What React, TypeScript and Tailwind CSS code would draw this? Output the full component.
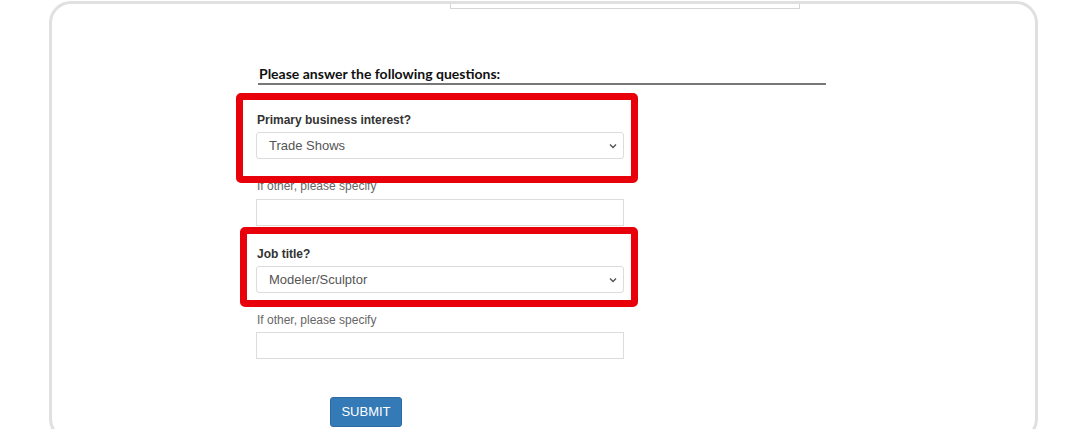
import React from 'react';

const Chevron: React.FC = () => (
  <svg width="8" height="6" viewBox="0 0 8 6" className="text-[#555]">
    <path d="M1 1.5 L4 4.5 L7 1.5" fill="none" stroke="currentColor" strokeWidth="1.4" />
  </svg>
);

const SelectBox: React.FC<{ value: string }> = ({ value }) => (
  <div className="flex h-[27px] w-[368px] items-center justify-between rounded-[3px] border border-[#dcdcdc] bg-white pl-[12px] pr-[6px] text-[13px] text-[#555]">
    <span>{value}</span>
    <Chevron />
  </div>
);

const TextBox: React.FC = () => (
  <div className="h-[27px] w-[368px] border border-[#dcdcdc] bg-white" />
);

const Label: React.FC<{ children: React.ReactNode }> = ({ children }) => (
  <div className="pl-[1px] text-[12px] leading-[13px] font-bold text-[#333]">{children}</div>
);

const Hint: React.FC = () => (
  <div className="pl-[1px] text-[12px] leading-[13px] text-[#666]">If other, please specify</div>
);

// red annotation frame drawn over the form
const Highlight: React.FC<{ className: string }> = ({ className }) => (
  <div className={`pointer-events-none absolute rounded-[5px] border-[7px] border-[#e8000b] ${className}`} />
);

export default function App() {
  return (
    <div className="h-[429px] w-[1080px] overflow-hidden bg-white font-['Liberation_Sans',Arial,sans-serif]">
      <div className="ml-[49px] mt-[1px] h-[440px] w-[989px] rounded-[22px] border-[3px] border-[#e0e0e0] bg-white">
        {/* tail of the field above */}
        <div className="ml-[398px] h-[5px] w-[350px] border-x border-b border-[#d6d6d6]" />

        <div className="ml-[206px] mt-[56px] w-[568px] border-b-2 border-[#777] pb-[1px]">
          <div className="pl-[1px] font-['Lato',sans-serif] text-[14px] leading-[17px] font-bold text-[#111]">
            Please answer the following questions:
          </div>
        </div>

        <div className="relative ml-[204px] mt-[29px] w-[368px]">
          <Highlight className="left-[-20px] top-[-21px] h-[90px] w-[402px]" />
          <Highlight className="left-[-16px] top-[113px] h-[80px] w-[398px]" />

          <Label>Primary business interest?</Label>
          <div className="mt-[5px]">
            <SelectBox value="Trade Shows" />
          </div>
          <div className="mt-[21px]">
            <Hint />
          </div>
          <div className="mt-[6px]">
            <TextBox />
          </div>

          <div className="mt-[22px]">
            <Label>Job title?</Label>
          </div>
          <div className="mt-[5px]">
            <SelectBox value="Modeler/Sculptor" />
          </div>
          <div className="mt-[21px]">
            <Hint />
          </div>
          <div className="mt-[5px]">
            <TextBox />
          </div>

          <div className="ml-[74px] mt-[38px]">
            <button className="h-[30px] w-[72px] rounded-[3px] border border-[#2e6da4] bg-[#337ab7] text-[13px] text-white">
              SUBMIT
            </button>
          </div>
        </div>
      </div>
    </div>
  );
}
